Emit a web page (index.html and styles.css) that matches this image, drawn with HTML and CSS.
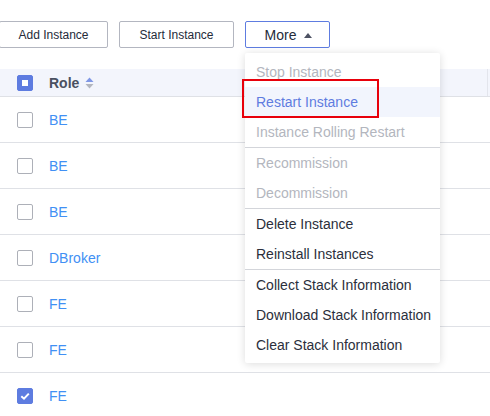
FILE: index.html
```html
<!DOCTYPE html>
<html>
<head>
<meta charset="utf-8">
<link rel="stylesheet" href="styles.css">
</head>
<body>
<div class="page">
  <div class="toolbar">
    <button class="btn btn-add">Add Instance</button>
    <button class="btn btn-start">Start Instance</button>
    <button class="btn btn-more">More <span class="caret"></span></button>
  </div>
  <div class="table">
    <div class="thead">
      <div class="cell-check"><span class="cb cb-partial"></span></div>
      <div class="th-role">Role
        <svg class="sort" width="9" height="12" viewBox="0 0 9 12"><path d="M4.5 0.5L8.5 5H0.5Z" fill="#7f97e6"/><path d="M4.5 11.5L8.5 7H0.5Z" fill="#b3b6bf"/></svg>
      </div>
      <div class="th-sep"></div>
    </div>
    <div class="row"><div class="cell-check"><span class="cb"></span></div><a class="link">BE</a></div>
    <div class="row"><div class="cell-check"><span class="cb"></span></div><a class="link">BE</a></div>
    <div class="row"><div class="cell-check"><span class="cb"></span></div><a class="link">BE</a></div>
    <div class="row"><div class="cell-check"><span class="cb"></span></div><a class="link">DBroker</a></div>
    <div class="row"><div class="cell-check"><span class="cb"></span></div><a class="link">FE</a></div>
    <div class="row"><div class="cell-check"><span class="cb"></span></div><a class="link">FE</a></div>
    <div class="row"><div class="cell-check"><span class="cb cb-checked"><svg width="16" height="16" viewBox="0 0 16 16"><path d="M4.3 8.2L7 10.7L11.8 5.6" fill="none" stroke="#fff" stroke-width="2"/></svg></span></div><a class="link">FE</a></div>
  </div>
  <div class="menu">
    <div class="item disabled">Stop Instance</div>
    <div class="item active">Restart Instance</div>
    <div class="item disabled">Instance Rolling Restart</div>
    <div class="divider"></div>
    <div class="item disabled">Recommission</div>
    <div class="item disabled">Decommission</div>
    <div class="divider"></div>
    <div class="item">Delete Instance</div>
    <div class="item">Reinstall Instances</div>
    <div class="divider"></div>
    <div class="item">Collect Stack Information</div>
    <div class="item">Download Stack Information</div>
    <div class="item">Clear Stack Information</div>
  </div>
  <div class="highlight-box"></div>
</div>
</body>
</html>
```

FILE: styles.css
```css
html, body {
  margin: 0;
  padding: 0;
  background: #fff;
  overflow: hidden;
}
body {
  font-family: "Liberation Sans", Arial, sans-serif;
  width: 490px;
  height: 416px;
}
.page {
  position: relative;
  width: 490px;
  height: 416px;
  overflow: hidden;
}
.toolbar {
  display: flex;
  gap: 11px;
  padding-top: 21px;
  margin-left: -1px;
  height: 27px;
}
.btn {
  box-sizing: border-box;
  height: 27px;
  border: 1px solid #b3b6c0;
  border-radius: 2px;
  background: #fff;
  font-family: "Liberation Sans", Arial, sans-serif;
  font-size: 12px;
  color: #252b3a;
  padding: 0;
  cursor: pointer;
}
.btn-add { width: 109px; }
.btn-start { width: 115px; }
.btn-more {
  width: 85px;
  font-size: 14px;
  border-color: #5e7ce0;
  display: flex;
  align-items: center;
  justify-content: center;
  gap: 8px;
  padding-left: 2px;
}
.caret {
  width: 0;
  height: 0;
  border-left: 4px solid transparent;
  border-right: 4px solid transparent;
  border-bottom: 5px solid #4d5263;
  margin-top: 1px;
}
.table {
  margin-top: 21px;
}
.thead {
  position: relative;
  height: 27px;
  background: #f3f5fc;
  border-bottom: 1px solid #dfe1e6;
  display: flex;
  align-items: center;
}
.th-sep {
  position: absolute;
  left: 487px;
  top: 0;
  width: 1px;
  height: 27px;
  background: #e3e5ec;
}
.cell-check {
  width: 49px;
  padding-left: 17px;
  box-sizing: border-box;
  display: flex;
  align-items: center;
}
.th-role {
  font-size: 14px;
  font-weight: bold;
  color: #4a5061;
  display: flex;
  align-items: center;
  gap: 6px;
}
.sort { margin-top: 1px; }
.cb {
  box-sizing: border-box;
  width: 16px;
  height: 16px;
  border: 1px solid #adb0b8;
  border-radius: 2px;
  background: #fff;
  display: flex;
  align-items: center;
  justify-content: center;
}
.cb-partial {
  background: #5e7ce0;
  border-color: #5e7ce0;
}
.cb-partial::after {
  content: "";
  width: 6px;
  height: 6px;
  background: #fff;
}
.cb-checked {
  background: #5e7ce0;
  border-color: #5e7ce0;
}
.cb-checked svg { display: block; margin: -1px; }
.row {
  height: 45px;
  border-bottom: 1px solid #dfe1e6;
  display: flex;
  align-items: center;
}
.link {
  font-size: 14px;
  color: #4190f4;
}
.menu {
  position: absolute;
  left: 245px;
  top: 53px;
  width: 195px;
  padding: 4px 0 3px;
  background: #fff;
  border-radius: 2px;
  box-shadow: 0 1px 8px rgba(0, 0, 0, 0.14);
}
.item {
  height: 30px;
  line-height: 30px;
  padding-left: 11px;
  font-size: 14px;
  color: #2b2f3c;
  white-space: nowrap;
}
.item.disabled { color: #b3b6be; }
.item.active {
  color: #5e7ce0;
  background: #f2f5fd;
}
.divider {
  height: 1px;
  background: #d3d5da;
}
.highlight-box {
  position: absolute;
  left: 242px;
  top: 79px;
  width: 137px;
  height: 39px;
  box-sizing: border-box;
  border: 2px solid #e8000b;
}
```
